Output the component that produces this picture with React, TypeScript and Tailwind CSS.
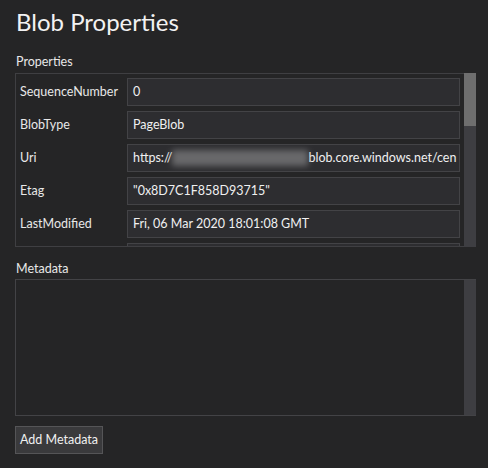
import React from "react";

const props: { name: string; value: React.ReactNode }[] = [
  { name: "SequenceNumber", value: "0" },
  { name: "BlobType", value: "PageBlob" },
  {
    name: "Uri",
    value: (
      <>
        https://
        <span className="inline-block shrink-0 w-[136px] h-[16px] bg-[#909092] blur-[3px] opacity-60" />
        blob.core.windows.net/cen
      </>
    ),
  },
  { name: "Etag", value: "\"0x8D7C1F858D93715\"" },
  { name: "LastModified", value: "Fri, 06 Mar 2020 18:01:08 GMT" },
  { name: "", value: "" },
];

const Row = ({ name, value }: { name: string; value: React.ReactNode }) => (
  <div className="flex items-center h-[28px] shrink-0">
    <div className="w-[111px] shrink-0 pl-[4px] text-[12.5px] text-[#e8e8e8] whitespace-nowrap">{name}</div>
    <div className="flex items-center shrink-0 w-[333px] h-[28px] bg-[#2d2d30] border border-[#434346] px-[5px] text-[12.5px] text-[#f0f0f0] whitespace-nowrap overflow-hidden">
      {value}
    </div>
  </div>
);

export default function App() {
  return (
    <div
      className="w-[488px] h-[468px] bg-[#252526] pl-[15px] pt-[2px] overflow-hidden"
      style={{ fontFamily: "Lato, 'Open Sans', sans-serif" }}
    >
      <h1 className="text-[24px] leading-[40px] text-[#f2f2f2] pl-[1px]">Blob Properties</h1>

      <div className="mt-[12px] pl-[1px] text-[12.5px] leading-[16px] text-[#e8e8e8]">Properties</div>
      <div className="mt-[3px] flex w-[461px] h-[174px]">
        <div className="flex-1 border border-r-0 border-[#3f3f42] pt-[4px] flex flex-col gap-[5px] overflow-hidden">
          {props.map((p, i) => (
            <Row key={i} {...p} />
          ))}
        </div>
        <div className="w-[12px] bg-[#3e3e42] flex flex-col">
          <div className="h-[53px] bg-[#6e6e6e]" />
        </div>
      </div>

      <div className="mt-[14px] pl-[1px] text-[12.5px] leading-[16px] text-[#e8e8e8]">Metadata</div>
      <div className="mt-[2px] flex w-[461px] h-[137px] border-b border-l border-t border-[#434346]">
        <div className="flex-1" />
        <div className="w-[12px] bg-[#3e3e42]" />
      </div>

      <button className="mt-[10px] h-[28px] w-[88px] bg-[#3a3a3c] border border-[#555557] text-[12.5px] text-[#f0f0f0]">
        Add Metadata
      </button>
    </div>
  );
}
